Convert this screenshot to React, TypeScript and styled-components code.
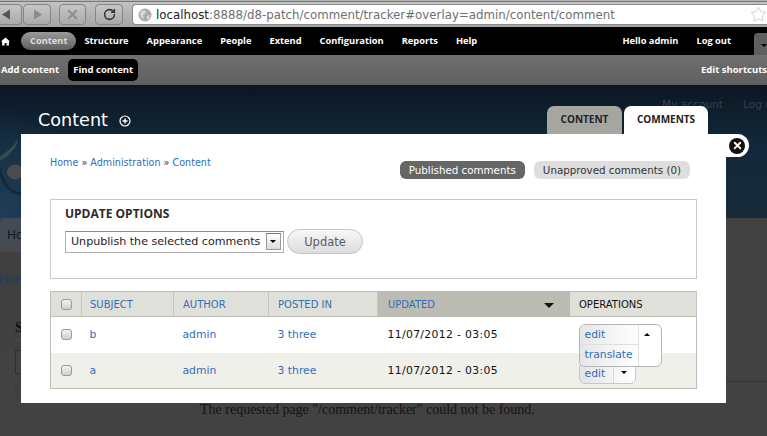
import React from 'react'
import styled, { createGlobalStyle, css } from 'styled-components'
import { RotateCw, Star, X } from 'lucide-react'

const uiFont = '"DejaVu Sans", "Liberation Sans", sans-serif'
const barFont = '"Open Sans", "Noto Sans", sans-serif'

const GlobalStyle = createGlobalStyle`
  html, body { margin: 0; padding: 0; }
  body { width: 767px; height: 436px; overflow: hidden; background: #424242; font-family: ${uiFont}; }
  a { text-decoration: none; color: #2f6fb7; }
`

const Page = styled.div`
  position: relative;
  width: 767px;
  height: 436px;
  overflow: hidden;
`

/* browser toolbar */
const Chrome = styled.div`
  height: 27px;
  box-sizing: border-box;
  padding: 4px 0 0 0;
  display: flex;
  background: linear-gradient(#b4b4b4 0, #b4b4b4 1px, #777 1px, #777 2px, #c2c2c2 2px, #a4a4a4 100%);
`

const NavBtn = styled.div<{ $w: number; $gap: number }>`
  width: ${p => p.$w}px;
  margin-right: ${p => p.$gap}px;
  height: 21px;
  box-sizing: border-box;
  border: 1px solid #858585;
  border-radius: 4px;
  background: linear-gradient(#c6c6c6, #aaa);
  display: flex;
  align-items: center;
  justify-content: center;
  flex: none;
`

const BackBtn = styled(NavBtn)`
  border-left: none;
  border-radius: 0 4px 4px 0;
  justify-content: flex-start;
  padding-left: 2px;
`

const Address = styled.div`
  flex: 1;
  height: 21px;
  box-sizing: border-box;
  border: 1px solid #8a8a8a;
  border-right: none;
  border-radius: 4px 0 0 4px;
  background: #fff;
  display: flex;
  align-items: center;
  padding-left: 5px;
  font-size: 11.8px;
  color: #6f6f6f;
  white-space: nowrap;
  overflow: hidden;
`

const Host = styled.span`
  color: #222;
`

const UrlText = styled.div`
  flex: 1;
  margin-left: 4px;
`

const StarIcon = styled(Star)`
  flex: none;
  color: #c4c4c4;
`

/* admin toolbar */
const BlackBar = styled.div`
  height: 28px;
  background: #000;
  display: flex;
  align-items: center;
  font: bold 9.3px ${barFont};
`

const HomeLink = styled.a`
  display: flex;
  margin-left: 1px;
  margin-right: 11px;
  color: #fff;
`

const TopItem = styled.a<{ $active?: boolean }>`
  color: #fff;
  padding: 0 ${p => (p.$active ? 9 : 0)}px;
  margin-right: ${p => (p.$active ? 8 : 18)}px;
  height: 18px;
  line-height: 18px;
  border-radius: 9px;
  ${p => p.$active && 'background: linear-gradient(#9a9a9a, #5e5e5e); color: #ddd;'}
`

const TopRight = styled.div`
  margin-left: auto;
  display: flex;
  align-items: flex-end;
  height: 100%;
  line-height: 18px;
`

const UserItem = styled(TopItem)`
  margin: 0 18px 5px 0;
`

const ToggleTab = styled.div`
  width: 13px;
  height: 22px;
  background: #5f5f5f;
  border-radius: 4px 0 0 0;
  margin-left: 5px;
  position: relative;
  &::after {
    content: '';
    position: absolute;
    right: 0;
    top: 11px;
    border: 3px solid transparent;
    border-top-color: #000;
  }
`

const GreyBar = styled.div`
  height: 30px;
  background: linear-gradient(#707070, #5e5e5e);
  display: flex;
  align-items: center;
  justify-content: space-between;
  font: bold 9.5px ${barFont};
`

const ShortcutGroup = styled.div`
  display: flex;
  align-items: center;
  margin-left: 1px;
`

const Shortcut = styled.a<{ $on?: boolean }>`
  color: #fff;
  height: 22px;
  line-height: 22px;
  border-radius: 5px;
  padding: 0 ${p => (p.$on ? 5 : 0)}px;
  margin-right: ${p => (p.$on ? 0 : 9)}px;
  ${p => p.$on && 'background: #000;'}
`

const EditLink = styled(Shortcut)`
  margin-right: 0;
`

/* page behind the overlay */
const Header = styled.div`
  position: relative;
  height: 133px;
  box-sizing: border-box;
  padding: 21px 59px 0 38px;
  display: flex;
  align-items: flex-start;
  justify-content: space-between;
  background:
    radial-gradient(90px 110px at 0 100%, #1f3f58, rgba(31, 63, 88, 0)),
    linear-gradient(#0b1722, #12283a 45%, #172b3a);
`

const TitleRow = styled.div`
  display: flex;
  align-items: center;
  gap: 11px;
  margin-top: 2px;
`

const Title = styled.h1`
  margin: 0;
  font: 500 17.6px/24px ${uiFont};
  color: #fff;
`

const PlusIcon = styled.svg`
  width: 12px;
  height: 12px;
  margin-top: 2px;
`

const HeaderLinks = styled.div`
  position: absolute;
  top: 13px;
  left: 662px;
  display: flex;
  gap: 20px;
  font-size: 10.6px;
  white-space: nowrap;
  color: #324452;
`

const Tabs = styled.div`
  display: flex;
  gap: 2px;
  position: relative;
  z-index: 1;
`

const Tab = styled.a<{ $active?: boolean }>`
  display: block;
  box-sizing: border-box;
  height: 28px;
  width: ${p => (p.$active ? 84 : 75)}px;
  text-align: center;
  border-radius: 7px 7px 0 0;
  font: bold 10px/27px ${barFont};
  color: #222;
  background: ${p => (p.$active ? '#fff' : '#a6a6a1')};
`

const Drop = styled.svg`
  position: absolute;
  left: 0;
  top: 49px;
`

const Main = styled.div`
  display: flex;
  height: 133px;
`

const SideColumn = styled.div`
  width: 174px;
  flex: none;
  background: #404040;
`

const BackTab = styled.div`
  height: 34px;
  width: 60px;
  padding-left: 7px;
  box-sizing: border-box;
  border-radius: 7px 7px 0 0;
  background: linear-gradient(#3f4c59, #474a4e);
  color: #14191e;
  font-size: 12px;
  line-height: 34px;
`

const BackCrumb = styled.div`
  margin: 20px 0 0 -1px;
  font-size: 12px;
  line-height: 15px;
  color: #1d3f5c;
`

const BackBlock = styled.div`
  margin: 32px 0 0 15px;
`

const BackHeading = styled.div`
  font: bold 14px/18px "Liberation Serif", serif;
  color: #111;
  padding-bottom: 3px;
  border-bottom: 1px solid #4c4c4c;
`

const BackInput = styled.div`
  height: 22px;
  margin-top: 9px;
  border: 1px solid #2f2f2f;
`

const BackButton = styled.div`
  height: 16px;
  width: 60px;
  margin-top: 7px;
  border: 1px solid #383838;
  border-radius: 9px;
`

const ContentColumn = styled.div`
  flex: 1;
  min-width: 0;
`

const Rule = styled.div`
  margin-top: 163px;
  border-top: 1px solid #363636;
`

const NotFound = styled.p`
  margin: 19px 0 0 26px;
  font: 14px/17px "Liberation Serif", serif;
  color: #141414;
  white-space: nowrap;
`

/* overlay */
const Dialog = styled.div`
  position: absolute;
  left: 21px;
  top: 134px;
  width: 705px;
  height: 269px;
  background: #fff;
  box-sizing: border-box;
  padding: 22px 29px 0;
  color: #222;
`

const CloseTab = styled.a`
  position: absolute;
  left: 100%;
  top: 0;
  width: 23px;
  height: 23px;
  border-radius: 0 12px 12px 0;
  background: #fff;
  display: flex;
  align-items: center;
`

const CloseDot = styled.span`
  width: 16px;
  height: 16px;
  margin-left: 3px;
  border-radius: 50%;
  background: #111;
  color: #fff;
  display: flex;
  align-items: center;
  justify-content: center;
`

const DialogTop = styled.div`
  display: flex;
  justify-content: space-between;
  height: 43px;
  padding-right: 7px;
`

const Crumbs = styled.div`
  font-size: 9.6px;
  line-height: 13px;
  color: #333;
`

const SecondaryTabs = styled.div`
  display: flex;
  gap: 9px;
  margin-top: 5px;
`

const SecondaryTab = styled.a<{ $active?: boolean }>`
  height: 18px;
  line-height: 18px;
  padding: 0 9px;
  border-radius: 6px;
  font-size: 10.3px;
  color: ${p => (p.$active ? '#fff' : '#333')};
  background: ${p => (p.$active ? '#666' : '#dedede')};
`

const Fieldset = styled.div`
  box-sizing: border-box;
  height: 80px;
  border: 1px solid #c8c8c8;
  padding: 7px 14px 0;
`

const Legend = styled.div`
  font: bold 12px/14px ${barFont};
  color: #2c2c2c;
`

const Controls = styled.div`
  display: flex;
  align-items: center;
  gap: 3px;
  margin-top: 8px;
`

const SelectBox = styled.div`
  box-sizing: border-box;
  width: 219px;
  height: 22px;
  border: 1px solid #b0b0b0;
  border-top-color: #8c8c8c;
  padding: 0 2px 0 5px;
  display: flex;
  align-items: center;
  justify-content: space-between;
  font-size: 11.1px;
  color: #222;
  white-space: nowrap;
`

const SelectArrow = styled.span`
  width: 13px;
  height: 15px;
  border: 1px solid #999;
  border-top-color: #777;
  background: linear-gradient(#fff, #ddd);
  position: relative;
  &::after {
    content: '';
    position: absolute;
    left: 3px;
    top: 6px;
    border: 3px solid transparent;
    border-top-color: #000;
  }
`

const Button = styled.button`
  width: 76px;
  height: 25px;
  padding: 0;
  border: 1px solid #c4c4c4;
  border-radius: 13px;
  background: linear-gradient(#f7f7f7, #dcdcdc);
  font: 11.5px ${uiFont};
  color: #5c5c5c;
`

const Table = styled.table`
  margin-top: 12px;
  width: 646px;
  table-layout: fixed;
  border-collapse: collapse;
  border: 1px solid #bebeb7;
  font-size: 10.8px;
`

// the subject and updated columns sit a pixel off the others
const cellPadding = css`
  padding: 0 0 0 9px;
  box-sizing: border-box;
  &:nth-child(2) { padding-left: 8px; }
  &:nth-child(5) { padding-left: 10px; }
`

const Th = styled.th<{ $sorted?: boolean }>`
  ${cellPadding}
  height: 25px;
  text-align: left;
  font-weight: normal;
  font-size: 10px;
  color: #111;
  background: ${p => (p.$sorted ? '#bcbcb5' : '#e0e0da')};
  border-right: 1px solid ${p => (p.$sorted ? '#bcbcb5' : '#c6c6bf')};
  border-bottom: 1px solid #bebeb7;
  position: relative;
`

const SortArrow = styled.span`
  position: absolute;
  right: 15px;
  top: 11px;
  border: 5px solid transparent;
  border-top-color: #111;
  border-bottom: none;
`

const Row = styled.tr<{ $even?: boolean }>`
  background: ${p => (p.$even ? '#f0f0eb' : '#fff')};
`

const Td = styled.td`
  ${cellPadding}
  height: 36px;
  color: #111;
  position: relative;
`

const DateText = styled.span`
  letter-spacing: 0.35px;
`

const Check = styled.input.attrs({ type: 'checkbox' })`
  appearance: none;
  display: block;
  margin: 0 0 0 1px;
  width: 11px;
  height: 11px;
  border: 1px solid #9a9a9a;
  border-radius: 3px;
  background: linear-gradient(#f2f2f2, #cfcfcf);
`

const DropButton = styled.div`
  box-sizing: border-box;
  width: 57px;
  height: 22px;
  margin-top: 6px;
  padding-left: 5px;
  border: 1px solid #c8c8c8;
  border-radius: 6px;
  background: linear-gradient(90deg, #e4e4e4, #fff);
  display: flex;
  align-items: center;
  position: relative;
`

const Caret = styled.span<{ $up?: boolean; $right: number; $top: number }>`
  position: absolute;
  right: ${p => p.$right}px;
  top: ${p => p.$top}px;
  border: 3px solid transparent;
  ${p => (p.$up ? 'border-bottom-color: #000; border-top: none;' : 'border-top-color: #000; border-bottom: none;')}
`

const DropDivider = styled.span`
  position: absolute;
  left: 33px;
  top: 0;
  bottom: 0;
  border-left: 1px solid #d8d8d8;
`

const OpenDropButton = styled.div`
  position: absolute;
  left: 9px;
  top: 7px;
  z-index: 2;
  box-sizing: border-box;
  width: 83px;
  height: 43px;
  border: 1px solid #b4b4b4;
  border-radius: 6px;
  background: #fff;
  overflow: hidden;
`

const DropItem = styled.div<{ $last?: boolean }>`
  box-sizing: border-box;
  width: 59px;
  height: ${p => (p.$last ? 21 : 20)}px;
  line-height: 20px;
  padding-left: 5px;
  background: linear-gradient(90deg, #e6e6e6, #fff);
  border-right: 1px solid #dedede;
  ${p => !p.$last && 'border-bottom: 1px solid #dedede;'}
`

const HomeGlyph = () => (
  <svg width="9" height="9" viewBox="0 0 9 9" fill="currentColor">
    <path d="M4.5 0.5 L9 4.6 L7.9 4.6 L7.9 8.5 L5.5 8.5 L5.5 6 L3.5 6 L3.5 8.5 L1.1 8.5 L1.1 4.6 L0 4.6 Z" />
  </svg>
)

const Globe = () => (
  <svg width="14" height="14" viewBox="0 0 14 14">
    <circle cx="7" cy="7" r="6.5" fill="#a9adb2" />
    <path d="M3 3 L7 2 L8 5 L5 7 L6 11 L3.5 10 L2 6 Z M9 8 L12 7 L11 11 L9 11 Z" fill="#d6d8da" />
  </svg>
)

const Tri = ({ dir, fill }: { dir: 'l' | 'r'; fill: string }) => (
  <svg width="9" height="11" viewBox="0 0 9 11" fill={fill}>
    <path d={dir === 'l' ? 'M0 5.5 L8 0.5 L8 10.5 Z' : 'M9 5.5 L1 0.5 L1 10.5 Z'} />
  </svg>
)

const rows = [
  { subject: 'b', even: false },
  { subject: 'a', even: true },
]

const widths = [31, 92, 95, 109, 192, 127]

export default function App() {
  return (
    <Page>
      <GlobalStyle />
      <Chrome>
        <BackBtn $w={22} $gap={1}><Tri dir="l" fill="#555" /></BackBtn>
        <NavBtn $w={28} $gap={8}><Tri dir="r" fill="#8c8c8c" /></NavBtn>
        <NavBtn $w={27} $gap={9}><X size={15} strokeWidth={3} color="#8c8c8c" /></NavBtn>
        <NavBtn $w={28} $gap={9}><RotateCw size={13} strokeWidth={2.8} color="#333" /></NavBtn>
        <Address>
          <Globe />
          <UrlText><Host>localhost</Host>:8888/d8-patch/comment/tracker#overlay=admin/content/comment</UrlText>
          <StarIcon size={17} strokeWidth={1.2} />
        </Address>
      </Chrome>
      <BlackBar>
        <HomeLink><HomeGlyph /></HomeLink>
        <TopItem $active>Content</TopItem>
        <TopItem>Structure</TopItem>
        <TopItem>Appearance</TopItem>
        <TopItem>People</TopItem>
        <TopItem>Extend</TopItem>
        <TopItem>Configuration</TopItem>
        <TopItem>Reports</TopItem>
        <TopItem>Help</TopItem>
        <TopRight>
          <UserItem>Hello admin</UserItem>
          <UserItem>Log out</UserItem>
          <ToggleTab />
        </TopRight>
      </BlackBar>
      <GreyBar>
        <ShortcutGroup>
          <Shortcut>Add content</Shortcut>
          <Shortcut $on>Find content</Shortcut>
        </ShortcutGroup>
        <EditLink>Edit shortcuts</EditLink>
      </GreyBar>
      <Header>
        <Drop width="21" height="70" viewBox="0 0 21 70">
          <path d="M0 23 C7 17 14 13 18 5 C17 14 9 22 0 27 Z" fill="#3a4a55" />
          <ellipse cx="15" cy="38" rx="8" ry="7.5" fill="#4a4c4e" />
          <path d="M0 34 C1 48 9 58 21 60" fill="none" stroke="#16293a" strokeWidth="3" />
        </Drop>
        <TitleRow>
          <Title>Content</Title>
          <PlusIcon viewBox="0 0 12 12">
            <circle cx="6" cy="6" r="5" fill="none" stroke="#fff" strokeWidth="1.2" />
            <path d="M6 3.5 V8.5 M3.5 6 H8.5" stroke="#fff" strokeWidth="1.4" />
          </PlusIcon>
        </TitleRow>
        <HeaderLinks>
          <span>My account</span>
          <span>Log out</span>
        </HeaderLinks>
        <Tabs>
          <Tab>CONTENT</Tab>
          <Tab $active>COMMENTS</Tab>
        </Tabs>
      </Header>
      <Main>
        <SideColumn>
          <BackTab>Home</BackTab>
          <BackCrumb>Home</BackCrumb>
          <BackBlock>
            <BackHeading>Search</BackHeading>
            <BackInput />
            <BackButton />
          </BackBlock>
        </SideColumn>
        <ContentColumn>
          <Rule />
          <NotFound>The requested page "/comment/tracker" could not be found.</NotFound>
        </ContentColumn>
      </Main>
      <Dialog>
        <CloseTab>
          <CloseDot><X size={11} strokeWidth={4} /></CloseDot>
        </CloseTab>
        <DialogTop>
          <Crumbs>
            <a>Home</a> » <a>Administration</a> » <a>Content</a>
          </Crumbs>
          <SecondaryTabs>
            <SecondaryTab $active>Published comments</SecondaryTab>
            <SecondaryTab>Unapproved comments (0)</SecondaryTab>
          </SecondaryTabs>
        </DialogTop>
        <Fieldset>
          <Legend>UPDATE OPTIONS</Legend>
          <Controls>
            <SelectBox>
              Unpublish the selected comments
              <SelectArrow />
            </SelectBox>
            <Button>Update</Button>
          </Controls>
        </Fieldset>
        <Table>
          <colgroup>
            {widths.map((w, i) => <col key={i} width={w} />)}
          </colgroup>
          <thead>
            <tr>
              <Th><Check /></Th>
              <Th><a>SUBJECT</a></Th>
              <Th><a>AUTHOR</a></Th>
              <Th><a>POSTED IN</a></Th>
              <Th $sorted><a>UPDATED</a><SortArrow /></Th>
              <Th>OPERATIONS</Th>
            </tr>
          </thead>
          <tbody>
            {rows.map(r => (
              <Row key={r.subject} $even={r.even}>
                <Td><Check /></Td>
                <Td><a>{r.subject}</a></Td>
                <Td><a>admin</a></Td>
                <Td><a>3 three</a></Td>
                <Td><DateText>11/07/2012 - 03:05</DateText></Td>
                <Td>
                  {r.even ? (
                    <DropButton>
                      <a>edit</a>
                      <DropDivider />
                      <Caret $right={8} $top={8} />
                    </DropButton>
                  ) : (
                    <OpenDropButton>
                      <DropItem><a>edit</a></DropItem>
                      <DropItem $last><a>translate</a></DropItem>
                      <Caret $up $right={11} $top={8} />
                    </OpenDropButton>
                  )}
                </Td>
              </Row>
            ))}
          </tbody>
        </Table>
      </Dialog>
    </Page>
  )
}
